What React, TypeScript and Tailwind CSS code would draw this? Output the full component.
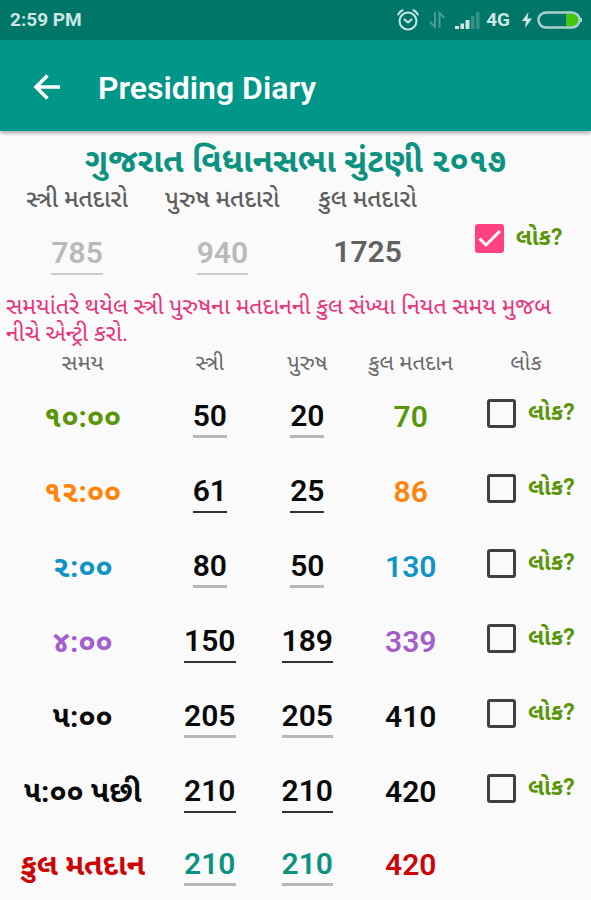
import { useState } from "react";

type Row = {
  time: string;
  color: string;
  women: string;
  men: string;
  line: string;
  inputColor?: string;
  lock: boolean;
};

const DARK_LINE = "border-b-2 border-[#333333]";
const GREY_LINE = "border-b-3 border-[#b8b8b8]";

const ROWS: Row[] = [
  { time: "૧૦:૦૦", color: "text-[#5a960a]", women: "50", men: "20", line: GREY_LINE, lock: true },
  { time: "૧૨:૦૦", color: "text-[#ff8308]", women: "61", men: "25", line: DARK_LINE, lock: true },
  { time: "૨:૦૦", color: "text-[#1094c8]", women: "80", men: "50", line: GREY_LINE, lock: true },
  { time: "૪:૦૦", color: "text-[#a45fcb]", women: "150", men: "189", line: DARK_LINE, lock: true },
  { time: "૫:૦૦", color: "text-[#0a0a0a]", women: "205", men: "205", line: GREY_LINE, lock: true },
  { time: "૫:૦૦ પછી", color: "text-[#0a0a0a]", women: "210", men: "210", line: DARK_LINE, lock: true },
  {
    time: "કુલ મતદાન",
    color: "text-[#cc0505]",
    women: "210",
    men: "210",
    line: GREY_LINE,
    inputColor: "text-[#0b9280]",
    lock: false,
  },
];

export default function App() {
  const [rows, setRows] = useState(ROWS);
  const [women, setWomen] = useState("785");
  const [men, setMen] = useState("940");

  const update = (i: number, key: "women" | "men", value: string) =>
    setRows(rows.map((r, n) => (n === i ? { ...r, [key]: value } : r)));

  return (
    <div className="min-h-screen bg-[#fafafa] font-[Roboto,'Noto_Sans_Gujarati','Noto_Sans',sans-serif]">
      <StatusBar />

      <header className="relative flex h-[91px] items-center bg-[#009688] px-8 pt-1 shadow-[0_2px_4px_rgba(0,0,0,0.35)]">
        <button aria-label="Back" className="mr-9">
          <svg width="30" height="28" viewBox="0 0 30 28" fill="none" stroke="white" strokeWidth="3.500">
            <path d="M28 13H4M15.500 1.500L4 13L15.500 24.500" />
          </svg>
        </button>
        <h1 className="text-[32px] leading-10 font-semibold text-white">Presiding Diary</h1>
      </header>

      <main>
        <h2 className="pt-2 text-center text-[33px] leading-[44px] font-bold text-[#0b9280]">
          ગુજરાત વિધાનસભા ચુંટણી ૨૦૧૭
        </h2>

        <section className="grid grid-cols-[146fr_144fr_146fr_150fr] pl-1 text-center">
          <div>
            <Label id="women">સ્ત્રી મતદારો</Label>
            <NumberField id="women" value={women} onChange={setWomen} className="mt-4 h-11 border-b-2 border-[#cccccc] text-[#b9b9b9]" />
          </div>
          <div>
            <Label id="men">પુરુષ મતદારો</Label>
            <NumberField id="men" value={men} onChange={setMen} className="mt-4 h-11 border-b-2 border-[#cccccc] text-[#b9b9b9]" />
          </div>
          <div>
            <Label id="total">કુલ મતદારો</Label>
            <output id="total" className="mt-4 block text-[30px] leading-[42px] font-semibold text-[#626262]">
              {Number(women) + Number(men)}
            </output>
          </div>
          <div className="flex items-start justify-start pt-10 pl-[34px]">
            <Lock defaultChecked />
          </div>
        </section>

        <p className="mt-[18px] px-[6px] text-[23px] leading-[27px] text-[#e8337a]">
          સમયાંતરે થયેલ સ્ત્રી પુરુષના મતદાનની કુલ સંખ્યા નિયત સમય મુજબ નીચે એન્ટ્રી કરો.
        </p>

        <table className="w-full table-fixed text-center">
          <colgroup>
            <col className="w-[28%]" />
            <col className="w-[15%]" />
            <col className="w-[18%]" />
            <col className="w-[17%]" />
            <col className="w-[22%]" />
          </colgroup>
          <thead>
            <tr className="h-8 text-[22px] leading-8 text-[#6a6a6a]">
              <th className="font-normal">સમય</th>
              <th className="font-normal">સ્ત્રી</th>
              <th className="font-normal">પુરુષ</th>
              <th className="font-normal whitespace-nowrap">કુલ મતદાન</th>
              <th className="font-normal">લોક</th>
            </tr>
          </thead>
          <tbody>
            {rows.map((row, i) => (
              <tr key={row.time} className="h-[75px] last:h-[68px] last:*:pt-1">
                <th className={`text-[30px] leading-9 font-bold whitespace-nowrap ${row.color}`}>{row.time}</th>
                <td>
                  <NumberField
                    label={`${row.time} સ્ત્રી`}
                    value={row.women}
                    onChange={(v) => update(i, "women", v)}
                    className={`h-[42px] ${row.line} ${row.inputColor ?? "text-[#0a0a0a]"}`}
                  />
                </td>
                <td>
                  <NumberField
                    label={`${row.time} પુરુષ`}
                    value={row.men}
                    onChange={(v) => update(i, "men", v)}
                    className={`h-[42px] ${row.line} ${row.inputColor ?? "text-[#0a0a0a]"}`}
                  />
                </td>
                <td className={`text-[30px] leading-9 font-semibold ${row.color}`}>
                  {Number(row.women) + Number(row.men)}
                </td>
                <td className="pl-[26px] text-left">{row.lock && <Lock />}</td>
              </tr>
            ))}
          </tbody>
        </table>
      </main>
    </div>
  );
}

function Label({ id, children }: { id: string; children: React.ReactNode }) {
  return (
    <label htmlFor={id} className="block text-[24px] leading-8 font-medium text-[#5e5e5e]">
      {children}
    </label>
  );
}

function NumberField({
  id,
  label,
  value,
  onChange,
  className,
}: {
  id?: string;
  label?: string;
  value: string;
  onChange: (value: string) => void;
  className: string;
}) {
  return (
    <input
      id={id}
      aria-label={label}
      inputMode="numeric"
      value={value}
      onChange={(e) => onChange(e.target.value)}
      className={`field-sizing-content min-w-8 bg-transparent text-center text-[30px] font-semibold outline-none ${className}`}
    />
  );
}

function Lock({ defaultChecked = false }: { defaultChecked?: boolean }) {
  return (
    <label className="inline-flex items-center gap-3 text-[23px] leading-[30px] font-bold text-[#5a960a]">
      <span className="relative size-[29px] shrink-0">
        <input
          type="checkbox"
          defaultChecked={defaultChecked}
          className="peer block size-full appearance-none rounded-[3px] border-3 border-[#404040] checked:border-[#ff4081] checked:bg-[#ff4081]"
        />
        <svg
          viewBox="0 0 29 29"
          fill="none"
          stroke="white"
          strokeWidth="3"
          className="pointer-events-none absolute inset-0 hidden peer-checked:block"
        >
          <path d="M4.500 14.500L11 21L25 7" />
        </svg>
      </span>
      લોક?
    </label>
  );
}

function StatusBar() {
  return (
    <div className="flex h-10 items-center bg-[#007668] pr-[9px] pl-[10px] text-[19px] font-bold text-[#cfe6e2]">
      <span className="mr-auto">2:59 PM</span>
      {/* alarm */}
      <svg width="22" height="22" viewBox="0 0 22 22" fill="none" stroke="currentColor" strokeWidth="2" strokeLinecap="round">
        <circle cx="11" cy="12" r="8.500" />
        <path d="M7.500 10.500L11 13.500L14.500 10.500M1.200 5.500C2 3.500 3.500 2 5.500 1.200M20.800 5.500C20 3.500 18.500 2 16.500 1.200" />
      </svg>
      {/* data transfer */}
      <svg className="ml-[10px] opacity-35" width="17" height="18" viewBox="0 0 17 18" fill="none" stroke="currentColor" strokeWidth="2">
        <path d="M6 1V16L1 11M10.500 17V2L15.500 7" />
      </svg>
      {/* signal */}
      <svg className="ml-[9px]" width="25" height="17" viewBox="0 0 25 17" fill="currentColor">
        <path d="M0 14H4V17H0ZM5.500 11.500H9V17H5.500ZM10.500 8H14.500V17H10.500Z" />
        <path d="M16 4H19.500V17H16ZM21 0H24.500V17H21Z" opacity="0.25" />
      </svg>
      <span className="ml-[6px]">4G</span>
      {/* charging */}
      <svg className="ml-3" width="10" height="16" viewBox="0 0 10 16" fill="currentColor">
        <path d="M6.500 0L0 9H4L3 16L10 6.500H5.500Z" />
      </svg>
      <svg className="ml-[5px]" width="45" height="18" viewBox="0 0 45 18" fill="none">
        <path d="M29 3H37Q41 3 41 9T37 15H29Z" fill="#46c410" />
        <rect x="1.500" y="1.500" width="41" height="15" rx="7.500" stroke="#a9d2cb" strokeWidth="2.500" />
        <path d="M44 7V11" stroke="#a9d2cb" strokeWidth="2" />
      </svg>
    </div>
  );
}
